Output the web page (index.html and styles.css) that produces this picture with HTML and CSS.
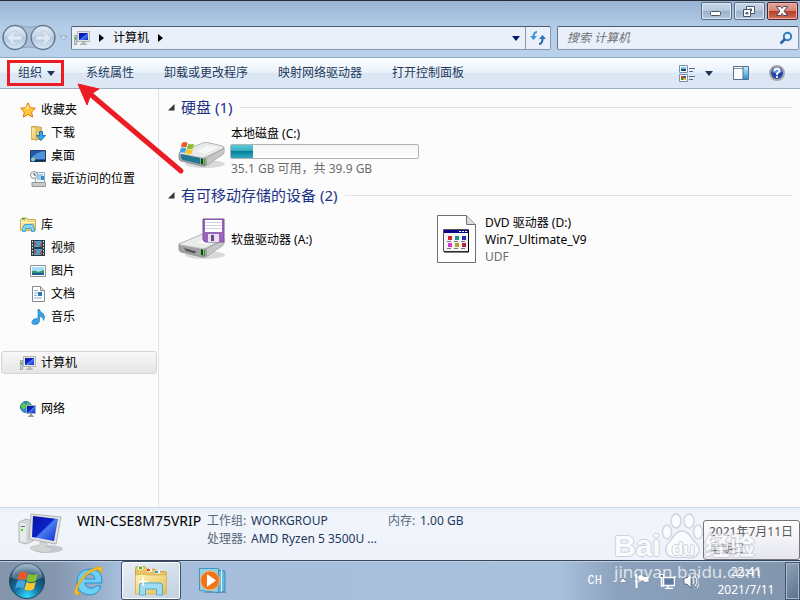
FILE: index.html
```html
<!DOCTYPE html>
<html lang="zh-CN">
<head>
<meta charset="utf-8">
<title>计算机</title>
<link rel="stylesheet" href="styles.css">
</head>
<body>
<svg class="defs" aria-hidden="true">
  <defs>
    <linearGradient id="screen" x1="0" y1="0" x2="1" y2="1"><stop offset="0" stop-color="#0713a0"/><stop offset=".48" stop-color="#0a23c8"/><stop offset=".52" stop-color="#4a7df0"/><stop offset="1" stop-color="#0d2bd2"/></linearGradient>
    <linearGradient id="folder" x1="0" y1="0" x2="1" y2="1"><stop offset="0" stop-color="#fff3b4"/><stop offset="1" stop-color="#e2bd58"/></linearGradient>
    <linearGradient id="blue" x1="0" y1="0" x2="0" y2="1"><stop offset="0" stop-color="#b9ecfb"/><stop offset="1" stop-color="#2f96d2"/></linearGradient>
    <linearGradient id="nav" x1="0" y1="0" x2="0" y2="1"><stop offset="0" stop-color="#e2edf7"/><stop offset=".48" stop-color="#c2d3e5"/><stop offset=".5" stop-color="#afc5da"/><stop offset="1" stop-color="#d8eaf8"/></linearGradient>
    <radialGradient id="orb" cx=".5" cy=".95" r=".9"><stop offset="0" stop-color="#35dcff"/><stop offset=".4" stop-color="#1474a5"/><stop offset=".75" stop-color="#174666"/><stop offset="1" stop-color="#7d9db2"/></radialGradient>
    <symbol id="pc" viewBox="0 0 16 16">
      <rect x=".5" y="5.5" width="2" height="9" fill="#d9dcdd" stroke="#a5a9ac"/><rect x="1" y="7" width="1" height="3" fill="#42cc32"/>
      <rect x="3.5" y="1.5" width="12" height="10" fill="#e5e5e2" stroke="#b6b6b3"/><rect x="5" y="3" width="9" height="7" fill="url(#screen)"/>
      <path d="M8 12h3v1l2 1v1H6v-1l2-1z" fill="#b3b5b6"/>
    </symbol>
    <symbol id="flag" viewBox="0 0 24 22">
      <path d="M4 3q4-3 8 0L10 10q-4-3-8 0z" fill="#e9572b"/><path d="M13 3.500q4 2.500 9 0L20 10.500q-5 2.500-9 0z" fill="#86bf2e"/>
      <path d="M2 11q4-3 8 0L8 18q-4-3-8 0z" fill="#40a5df"/><path d="M11 11.500q4 2.500 9 0L18 18.500q-5 2.500-9 0z" fill="#fcc72d"/>
    </symbol>
    <symbol id="drive" viewBox="0 0 48 28">
      <ellipse cx="27" cy="23" rx="20" ry="4" fill="#999" opacity=".35"/>
      <path d="M1 12L25 2q3-1 6 0l13 3q2 .5 2 2v4q0 2-2 3L29 24q-2 1.500-5 1L3 20q-2-.5-2-3z" fill="#a0a3a5" stroke="#86898b" stroke-width=".8"/>
      <path d="M1 12L25 2q3-1 6 0l13 3q3 1 0 3L28 16q-2 1-5 .5L3 13z" fill="#e9eaea" stroke="#b7b9bb" stroke-width=".6"/>
      <path d="M29 17L46 8v3q0 2-2 3L29 24z" fill="#c4c6c8"/>
      <path d="M19 10L29 5q7 0 11 1.500L27 13z" fill="#f8f8f8"/>
      <path d="M23 17.500l4 .5v5.500l-4-.5z" fill="#143d15"/><path d="M25 18h1.500v5H25z" fill="#58f333"/>
    </symbol>
  </defs>
</svg>
<div class="window">
  <header class="frame">
    <div class="caption">
      <button class="cap" aria-label="最小化"><svg width="30" height="16"><rect x="9.500" y="8.500" width="10" height="4" rx="1" fill="#fff" stroke="#4d5666"/></svg></button>
      <button class="cap" aria-label="还原"><svg width="30" height="16" fill="#fff" stroke="#4d5666"><path d="M12.500 3.500h8v7h-8zM15.500 6h2v2h-2z"/><path d="M9.500 6.500h7v7h-7z"/><path d="M12 9.500h2v1.500h-2z"/></svg></button>
      <button class="cap close" aria-label="关闭"><svg width="30" height="16"><path d="M9.500 3.500h4l1.500 2 1.500-2h4l-3.500 4.500 3.500 4.500h-4L15 10.500l-1.500 2h-4L13 8z" fill="#fff" stroke="#54495a"/></svg></button>
    </div>
    <div class="address-row">
      <div class="nav">
        <svg width="68" height="28" viewBox="0 0 68 28">
          <path d="M15 1q8 2 14 2T43 1a12.500 12.500 0 0 1 0 25q-8-3-14-3t-14 3a12.500 12.500 0 0 1 0-25" fill="#a9bfd8" stroke="#8da5c1"/>
          <g fill="url(#nav)" stroke="#65778d" stroke-width="1.300"><circle cx="15" cy="13.500" r="11.800"/><circle cx="43" cy="13.500" r="11.800"/></g>
          <g fill="#dfeaf4" stroke="#b9cbdc" stroke-width=".8"><path d="M7 14l7-7h3l-4 5h9v4h-9l4 5h-3z"/><path d="M51 14l-7-7h-3l4 5h-9v4h9l-4 5h3z"/></g>
          <path d="M60 12h7l-3.500 4z" fill="#dce9f6" stroke="#8da5c1"/>
        </svg>
      </div>
      <div class="address">
        <svg width="16" height="16"><use href="#pc"/></svg>
        <svg width="5" height="8"><path d="M0 0l5 4-5 4z"/></svg>
        <span>计算机</span>
        <svg width="5" height="8"><path d="M0 0l5 4-5 4z"/></svg>
        <button class="plain drop" aria-label="以前的位置"><svg width="8" height="5"><path d="M0 0h8L4 5z" fill="#051a68"/></svg></button>
        <button class="plain refresh" aria-label="刷新"><svg width="16" height="16"><path d="M7 2Q3.500 2 3.500 7.500" fill="none" stroke="#3f97d6" stroke-width="2"/><path d="M0 6h7l-3.500 4z" fill="#3f97d6"/><path d="M9 14q3.500 0 3.500-5.500" fill="none" stroke="#2362a5" stroke-width="2"/><path d="M9 9h7l-3.500-4z" fill="#2b74b8"/></svg></button>
      </div>
      <label class="search"><input type="text" placeholder="搜索 计算机" aria-label="搜索 计算机"><svg width="14" height="14" fill="none"><circle cx="8.500" cy="5.500" r="3.700" stroke="#2b7fc3" stroke-width="2"/><path d="M6 8l-4.500 4.500" stroke="#2360a0" stroke-width="2.500"/></svg></label>
    </div>
  </header>

  <nav class="toolbar">
    <button class="plain organize">组织<svg width="8" height="5"><path d="M0 0h8L4 5z" fill="#1d3557"/></svg></button>
    <button class="plain">系统属性</button>
    <button class="plain">卸载或更改程序</button>
    <button class="plain">映射网络驱动器</button>
    <button class="plain">打开控制面板</button>
    <div class="tools">
      <button class="plain view" aria-label="更改视图"><svg width="17" height="17"><g fill="#fff" stroke="#7b91a8"><path d="M.5.500h8v7h-8zM.5 9.500h8v7h-8z"/></g><path d="M2 2h5v2H2z" fill="#76c5ee"/><path d="M2 4h5v2H2z" fill="#154f6d"/><path d="M2 11h3v2H2z" fill="#dc3b25"/><path d="M5 11h2v2H5z" fill="#2754d2"/><path d="M2 13h2v2H2z" fill="#1d9b28"/><path d="M4 13h3v2H4z" fill="#e4b323"/><path d="M10 3.500h6M10 6.500h4M10 11.500h6M10 14.500h4" stroke="#536c8e"/></svg><svg width="8" height="5"><path d="M0 0h8L4 5z" fill="#1d3557"/></svg></button>
      <button class="plain" aria-label="预览窗格"><svg width="16" height="14"><path d="M.5.500h15v13H.5z" fill="#fff" stroke="#536f8f"/><path d="M1 2.500h9" stroke="#8397ae" /><path d="M10 1h5v12h-5z" fill="url(#blue)"/><path d="M10 1v12" stroke="#536f8f"/></svg></button>
      <button class="plain" aria-label="帮助"><svg width="16" height="16"><circle cx="8" cy="8" r="7" fill="#2347ae" stroke="#aaa8a5" stroke-width="2"/><path d="M3 7q1-4 5-4t5 4q-5 2-10 0" fill="#6f93e4"/><path d="M5.500 6q0-2.500 2.500-2.500T10.500 6Q10.500 7 8 8.500V10M8 11v2" stroke="#fff" stroke-width="1.800" fill="none"/></svg></button>
    </div>
  </nav>

  <main class="body">
    <aside class="side">
      <ul>
        <li class="root"><svg width="16" height="16"><path d="M8 .8l2.200 4.800 5.200.7-3.800 3.600 1 5.200L8 12.500l-4.700 2.600 1-5.200L.6 6.300l5.200-.7z" fill="#ffc73b" stroke="#df7b13"/><path d="M8 3l1.300 3.500H5z" fill="#ffeba0"/></svg>收藏夹</li>
        <li><svg width="16" height="16"><path d="M1.500 1.500h5l5 1v12h-10z" fill="#e8c76c" stroke="#c7a14b"/><path d="M1.500 1.500l5 2v12l-5-2z" fill="url(#folder)" stroke="#d6b257"/><path d="M9.500 6.500h3v4h3L11 15.500 6.500 10.500h3z" fill="#37a4ea" stroke="#1b74bc"/></svg>下载</li>
        <li><svg width="16" height="16"><path d="M.5 2.500h15v11H.5z" fill="#2456aa" stroke="#234261"/><path d="M1 11Q5 4 15 3v8z" fill="#4f93d8"/><path d="M1 12h14v1.500H1z" fill="#13304e"/><circle cx="3" cy="11.500" r="2" fill="#6cd0ef"/><path d="M3 10h1.500v2H3z" fill="#f2c445"/></svg>桌面</li>
        <li><svg width="16" height="16"><path d="M5.500 1.500h9v10h-9z" fill="#eef5fb" stroke="#9aa8b4"/><path d="M7 4h6M7 6h4M7 8h5" stroke="#5ba6d2"/><path d="M11 5h3v4h-3z" fill="#3791c5"/><path d="M2 11.500h13.500v4H2z" fill="#c8cacb" stroke="#96999b"/><circle cx="4" cy="4" r="3.500" fill="#f3f5f7" stroke="#8c979f"/><path d="M4 2v2h2" stroke="#456" fill="none"/></svg>最近访问的位置</li>
      </ul>
      <ul>
        <li class="root"><svg width="16" height="16"><path d="M.5 2.500L2 1h5l1 1.500h7.500v11H.5z" fill="url(#folder)" stroke="#cfac50"/><path d="M2 2h3" stroke="#23ae34" stroke-width="1.500"/><path d="M.5 5.500h15" stroke="#fff3c4"/><path d="M2.500 14.500v-3l2-4h8l2 4v3h-3v-3h-6v3z" fill="#80d2ef" stroke="#46a7ce"/></svg>库</li>
        <li><svg width="16" height="16"><path d="M1 0h14v16H1z" fill="#303a3f"/><path d="M2.500 1v14M13.500 1v14" stroke="#e5e9e4" stroke-dasharray="1.500 1.500"/><path d="M4 1h8v6H4zM4 9h8v6H4z" fill="#4a9fdb"/><path d="M4 1l3 3-3 2zM12 2L9 6l3 1zM4 9l3 3-3 2zM12 10l-3 4 3 1z" fill="#a9543d"/></svg>视频</li>
        <li><svg width="16" height="16"><path d="M.5 2.500h15v11H.5z" fill="#fff" stroke="#8b9194"/><path d="M2 4h12v8H2z" fill="#a6dff5"/><path d="M2 8q4-1 6 1l6-2v3H2z" fill="#36946d"/><path d="M2 10h12v2H2z" fill="#215f9b"/></svg>图片</li>
        <li><svg width="16" height="16"><path d="M2.500.500h8l4 4v11h-12z" fill="#fff" stroke="#858a90"/><path d="M10.500.500v4h4" fill="#ddd" stroke="#858a90"/><path d="M4 4.500h4M4 7h4M4 9.500h3M4 12h8" stroke="#7dafda"/><path d="M8 6h4v4H8z" fill="#2c7cb9"/></svg>文档</li>
        <li><svg width="16" height="16"><path d="M8 .5h1.500q.5 3 3.500 4 3 3 .5 7 0-4-4-4v4.500q-.5 3.500-4.500 3.500T2 12.500q1-3.500 6-3z" fill="#39a2e4" stroke="#1873b5" stroke-width=".6"/></svg>音乐</li>
      </ul>
      <ul>
        <li class="root selected"><svg width="16" height="16"><use href="#pc"/></svg>计算机</li>
      </ul>
      <ul>
        <li class="root"><svg width="16" height="16"><circle cx="6" cy="6" r="5.500" fill="#2d8ed1" stroke="#2672a1"/><path d="M2 2q4 0 4 3T3 8Q0 6 2 2M7 1q3 1 3 3L7 5z" fill="#5fcc3d"/><path d="M6.500 4.500h9v8h-9z" fill="#ddd" stroke="#acacac"/><path d="M7 5h8v7H7z" fill="url(#screen)"/><path d="M10 13h2v1l2 1v1H8v-1l2-1z" fill="#999"/></svg>网络</li>
      </ul>
    </aside>

    <section class="content">
      <h2><svg width="7" height="7"><path d="M6.500 0v6.500H0z" fill="#333"/></svg>硬盘 (1)</h2>
      <div class="items">
        <div class="item">
          <svg class="icon" width="48" height="48" viewBox="0 0 48 48"><use href="#drive" y="14" width="48" height="28"/><path d="M3 27l19 4v6L5 33q-2-1-2-3z" fill="#237891"/><use href="#flag" x="1" y="14" width="17" height="15"/></svg>
          <div class="text"><span>本地磁盘 (C:)</span><div class="meter"><i></i></div><span class="muted">35.1 GB 可用，共 39.9 GB</span></div>
        </div>
      </div>
      <h2><svg width="7" height="7"><path d="M6.500 0v6.500H0z" fill="#333"/></svg>有可移动存储的设备 (2)</h2>
      <div class="items">
        <div class="item">
          <svg class="icon" width="48" height="48" viewBox="0 0 48 48"><use href="#drive" y="17" width="48" height="28"/><path d="M6 33l12 3.500-1 2L8 36z" fill="#4f5153"/><path d="M25 4h21v23H27l-2-2z" fill="#9a66bb" stroke="#7d4d9c"/><path d="M27 5h17v12H27z" fill="#fff"/><path d="M27 7.500h17M27 10.500h17M27 13.500h17" stroke="#d8d1e0"/><path d="M30 19h11v8H30z" fill="#e4e1e8"/><path d="M33 20h3v6h-3z" fill="#70438a"/></svg>
          <div class="text"><span>软盘驱动器 (A:)</span></div>
        </div>
        <div class="item">
          <svg class="icon" width="43" height="48" viewBox="0 0 43 48"><path d="M.5.500h29l9 9v38H.5z" fill="#fff" stroke="#6d706d"/><path d="M29.500.500v9h9" fill="#ddd" stroke="#6d706d"/><path d="M6.500 14.500h25v22h-25z" fill="#f4f4f4" stroke="#555"/><path d="M31.500 15v22H7" fill="none" stroke="#000"/><path d="M7 15h24v3H7z" fill="#08088f"/><path d="M22 16.500h2m1 0h2m1 0h2" stroke="#fff"/><g stroke-width="4"><path d="M11 23h4" stroke="#cf2432"/><path d="M18 23h4" stroke="#14938f"/><path d="M25 23h4" stroke="#2029bd"/><path d="M11 30h4" stroke="#dc36d4"/><path d="M18 30h4" stroke="#aaa624"/><path d="M25 30h4" stroke="#bd2238"/></g><path d="M10 26.500h4m3 0h4m3 0h4M10 33.500h4m3 0h4m3 0h4" stroke="#777"/></svg>
          <div class="text"><span>DVD 驱动器 (D:)</span><span>Win7_Ultimate_V9</span><span class="muted">UDF</span></div>
        </div>
      </div>
    </section>
  </main>

  <section class="details">
    <svg width="46" height="42" viewBox="0 0 46 42"><ellipse cx="30" cy="37" rx="15" ry="4" fill="#a9adb2" opacity=".6"/><path d="M1 10l7-3 7 2v20l-7 3-7-2z" fill="#d4d7d8" stroke="#b5b8ba"/><path d="M2 11l6 1v18l-6-1z" fill="#e9ebeb"/><path d="M3 14h4v1H3z" fill="#606860"/><circle cx="4" cy="18" r="1.200" fill="#43db26"/><path d="M13 2l30 3-5 27-27-5z" fill="#e3e4e2" stroke="#b1b3b3"/><path d="M15 4l25 3-4 22-22-4z" fill="url(#screen)"/><path d="M22 30l7 1v4q9 1 4 4t-15 0-2-5l6-1z" fill="#d3d5d4" stroke="#b6b8b7" stroke-width=".7"/></svg>
    <strong>WIN-CSE8M75VRIP</strong>
    <dl><dt>工作组:</dt><dd>WORKGROUP</dd><dt>处理器:</dt><dd>AMD Ryzen 5 3500U ...</dd></dl>
    <dl><dt>内存:</dt><dd>1.00 GB</dd></dl>
  </section>

  <footer class="taskbar">
    <button class="plain start" aria-label="开始"><svg width="38" height="38"><circle cx="19" cy="19" r="17.500" fill="url(#orb)" stroke="#1b4663"/><path d="M4 16a15 15 0 0 1 30 0q-15 5-30 0" fill="#fff" opacity=".25"/><use href="#flag" x="7" y="8" width="25" height="23"/></svg></button>
    <button class="plain ie" aria-label="Internet Explorer"><svg width="32" height="32" viewBox="0 0 32 32"><path d="M29 18H12q1 6 7 5 3 0 4-2h5q-3 9-11 9Q4 29 4 17T17 4q13 0 12 14zM12 14h10q-1-5-5-5t-5 5z" fill="#6fd0f6" stroke="#2490cf"/><path d="M8 28q-8 5-6-3T14 7Q27-1 29 3q1 3-2 6 1-5-4-4Q14 7 6 20q-4 9 2 8z" fill="#f8c12c" stroke="#d79b13" stroke-width=".7"/></svg></button>
    <button class="plain active" aria-label="资源管理器"><svg width="34" height="30" viewBox="0 0 34 30"><path d="M1.500 2.500q0-2 2-2h7l2 2 9 1 2 2h7q2 0 2 2v20h-31z" fill="#e9c465" stroke="#c9a14a"/><path d="M4 2h5M13 4h5M21 6h5" stroke="#fff" stroke-width="3"/><path d="M5 2h3" stroke="#23b637" stroke-width="2"/><path d="M13 4h3" stroke="#dd4737" stroke-width="2"/><path d="M21 6h3" stroke="#319bdd" stroke-width="2"/><path d="M1.500 9q6-2 12 0h19v19h-31z" fill="url(#folder)" stroke="#d9b75d"/><path d="M5.500 29v-9q0-3 3-3h17q3 0 3 3v9h-6v-6h-11v6z" fill="#9fdcf4" stroke="#57aacd"/><path d="M9 11v9M4.500 15.500h9" stroke="#fff" stroke-width="1.500"/></svg></button>
    <button class="plain" aria-label="Windows Media Player"><svg width="30" height="26"><path d="M2 25h26l-4-4z" fill="#7891ad"/><path d="M17 2l9 1v20l-9 2z" fill="#69b8dc" stroke="#3a8cb2"/><path d="M22.500 2v22" stroke="#d8f2fb"/><path d="M.5.500h19v24l-19-2z" fill="#94cfe8" stroke="#4696bc"/><circle cx="11" cy="12.500" r="9.500" fill="#ef7319" stroke="#ffb36e"/><path d="M8 6l9 6.500L8 19z" fill="#fff"/></svg></button>
    <div class="tray">
      <span class="lang">CH</span>
      <button class="plain" aria-label="显示隐藏的图标"><svg width="8" height="5"><path d="M0 4.500h8L4 0z" fill="#fff" stroke="#4d617a" stroke-width=".5"/></svg></button>
      <svg width="16" height="16"><path d="M1.500 1v14" stroke="#fff" stroke-width="2"/><path d="M3 2q3-1 5 1 3 1 7 0l-2 3 2 3q-4 1-7-1-2-1-5 0z" fill="#fff" stroke="#405169" stroke-width=".6"/></svg>
      <svg width="16" height="16"><path d="M4.500 4.500h11v8h-11z" fill="#5e7c9e" stroke="#fff" stroke-width="1.500"/><path d="M9 13v2M6 15.500h8M2.500 5v8H5" stroke="#fff" stroke-width="1.500" fill="none"/><path d="M.5 1.500h4v3h-4z" fill="#58718d" stroke="#fff"/></svg>
      <svg width="16" height="16"><path d="M1 5h3l4-4v14l-4-4H1z" fill="#fff" stroke="#405169" stroke-width=".7"/><path d="M10 5q2 3 0 6M12 3q4 5 0 10M14 1q5 7 0 14" stroke="#fff" fill="none"/></svg>
      <time class="clock">22:41<br>2021/7/11</time>
    </div>
    <button class="plain desktop" aria-label="显示桌面"></button>
  </footer>

  <div class="tooltip" role="tooltip">2021年7月11日<br>星期日</div>

  <div class="watermark">
    <div class="brand"><span>Bai</span><span class="paw"><svg width="44" height="50" viewBox="0 0 44 50"><g fill="#fff" stroke="#c5cbd6" stroke-width="1.500"><ellipse cx="6" cy="20" rx="4.500" ry="7"/><ellipse cx="15" cy="9" rx="5" ry="7"/><ellipse cx="28" cy="9" rx="5" ry="7"/><ellipse cx="37" cy="20" rx="4.500" ry="7"/><path d="M21 19q6 0 11 9 9 8 5 14-3 5-15 3-12 2-16-3-4-7 4-14 5-9 11-9z"/></g></svg><b>du</b></span><span>经验</span></div>
    <div class="url">jingyan.baidu.com</div>
  </div>
  <svg class="arrow" width="108" height="96" viewBox="0 0 108 96"><path d="M12 10L104 88" stroke="#ec1c24" stroke-width="5" stroke-linecap="round"/><path d="M1 1l21 5-8 5-4 11z" fill="#ec1c24" stroke="#ec1c24"/></svg>
</div>
</body>
</html>
```
FILE: styles.css
```css
* { box-sizing: border-box; }
body {
  margin: 0;
  font: 12px/16px "Noto Sans", "Noto Sans CJK SC", sans-serif;
  color: #000;
}
button, input { font: inherit; color: inherit; }
svg { display: block; flex: none; }
ul, dl, dd { margin: 0; padding: 0; list-style: none; }
.defs { position: absolute; width: 0; height: 0; }
.plain { border: 0; padding: 0; background: none; }

.window {
  position: relative;
  display: flex;
  flex-direction: column;
  min-height: 100vh;
  overflow: hidden;
}

.frame {
  border-top: 1px solid #2b2f36;
  padding: 1px 1px 5px 0;
  background: linear-gradient(#98b4d3, #b5cee8 50%, #b9d1ea);
}
.caption { display: flex; justify-content: flex-end; gap: 2px; height: 22px; padding-right: 1px; }
.cap {
  width: 31px;
  height: 18px;
  padding: 0;
  border: 1px solid #566b87;
  border-radius: 2px;
  background: linear-gradient(#c8d7e8, #b6c8dd 48%, #9bb1cb 50%, #b2c8e0);
  box-shadow: inset 0 0 0 1px #dbe7f3;
}
.cap svg { margin: -1px 0 0 -1px; }
.close {
  border-color: #53202c;
  background: linear-gradient(#e5a598, #d78475 48%, #b93a25 50%, #d0705a);
  box-shadow: inset 0 0 0 1px #e8b4aa;
}
.address-row { display: flex; align-items: center; }
.nav { width: 71px; }
.address, .search {
  display: flex;
  align-items: center;
  height: 24px;
  border: 1px solid #8598af;
  border-top-color: #4c5a6c;
  border-left-color: #63758b;
  border-radius: 2px;
  background: #e9f0f9;
}
.address { flex: 1; gap: 9px; padding-left: 2px; }
.drop { margin-left: auto; }
.refresh {
  display: grid;
  place-items: center;
  width: 25px;
  height: 22px;
  border-left: 1px solid #8598af;
  margin-left: -4px;
}
.search { flex: 0 1 242px; min-width: 0; margin-left: 6px; padding: 0 5px 0 9px; }
.search input {
  flex: 1;
  min-width: 0;
  border: 0;
  padding: 0;
  outline: 0;
  background: none;
  font-style: italic;
}
.search input::placeholder { color: #6d7177; opacity: 1; }

.toolbar {
  display: flex;
  align-items: center;
  gap: 30px;
  height: 32px;
  padding-right: 15px;
  padding-left: 7px;
  border-top: 1px solid #8fabcb;
  border-bottom: 1px solid #a0b0c9;
  background: linear-gradient(#fcfeff, #e9f2fb 48%, #dce7f5 50%, #dce6f4);
  color: #1e395b;
}
.organize {
  display: flex;
  align-items: center;
  gap: 5px;
  height: 26px;
  margin-right: -8px;
  padding: 0 6px 0 8px;
  border: 3px solid #ec1c24;
}
.tools { display: flex; align-items: center; gap: 20px; margin-left: auto; }
.view { display: flex; align-items: center; gap: 9px; }

.body { flex: 1; display: flex; background: #fcfcfc; }
.side {
  display: flex;
  flex-direction: column;
  gap: 23px;
  width: 159px;
  padding: 9px 1px;
  border-right: 1px solid #d6e5f5;
}
.side li { display: flex; align-items: center; gap: 5px; height: 23px; padding-left: 29px; }
.side .root { padding-left: 19px; }
.side .selected {
  padding-left: 18px;
  border: 1px solid #d4d4d4;
  border-radius: 3px;
  background: linear-gradient(#f8f8f8, #e5e5e5);
}
.content { flex: 1; padding: 7px 7px 0 9px; }
h2 {
  display: flex;
  align-items: center;
  gap: 6px;
  margin: 0;
  font-size: 15px;
  line-height: 22px;
  font-weight: 400;
  color: #1e3287;
}
h2::after { content: ""; flex: 1; height: 1px; margin-left: 2px; background: #e2e2e2; }
.items {
  display: grid;
  grid-template-columns: repeat(auto-fill, 259px);
  height: 66px;
  padding: 7px 0 0 10px;
}
.item { display: flex; align-items: center; gap: 5px; height: 52px; }
.text { display: flex; flex-direction: column; line-height: 17px; }
.muted { color: #6d6d6d; }
.meter {
  width: 189px;
  height: 15px;
  margin: 2px 0 1px -1px;
  border: 1px solid #b2b2b2;
  border-radius: 2px;
  background: linear-gradient(#f4f4f4, #fff);
}
.meter i {
  display: block;
  width: 12%;
  height: 13px;
  background: linear-gradient(#5bcbdc, #35a9bd 48%, #068398 50%, #2faac0);
}

.details {
  display: flex;
  height: 53px;
  padding: 4px 18px;
  border-top: 1px solid #cbd8e8;
  background: linear-gradient(#e7eef8, #f0f4fb 10%, #f0f3fb);
  color: #1e395b;
}
.details strong { width: 130px; margin-left: 13px; font-size: 14px; line-height: 18px; font-weight: 400; color: #000; white-space: nowrap; }
.details dl { display: grid; grid-template-columns: 44px 1fr; align-content: start; width: 181px; line-height: 18px; white-space: nowrap; }
.details dl + dl { grid-template-columns: 32px 1fr; }
dt { color: #5a6778; }

.taskbar {
  display: flex;
  align-items: center;
  height: 40px;
  padding-left: 8px;
  border-top: 1px solid #354459;
  background: linear-gradient(90deg, #8394ab 0, #8496ae 55px, #a6bedb 120px, #a8c0dc 70%, #8ca2bd 77%, #8194ac);
  box-shadow: inset 0 1px #bed0e5;
  color: #fff;
}
.ie { margin: 0 16px 0 27px; }
.active {
  display: grid;
  place-items: center;
  width: 60px;
  height: 39px;
  margin-right: 18px;
  border: 1px solid #3c5067;
  border-radius: 3px;
  background: linear-gradient(150deg, #e9eff6, #c1d0e1);
  box-shadow: inset 0 0 0 1px #fff;
}
.tray { display: flex; align-items: center; gap: 8px; margin-left: auto; }
.lang { margin-right: 9px; font: 12px/12px "Liberation Mono", monospace; }
.clock { width: 78px; margin-top: 1px; line-height: 18px; text-align: center; }
.desktop {
  width: 15px;
  height: 38px;
  border: 1px solid #42566f;
  background: linear-gradient(135deg, #8fa2b9, #5c718b);
  box-shadow: inset 0 0 0 1px #a8b8cb;
}
.tooltip {
  position: absolute;
  right: 0;
  bottom: 40px;
  width: 97px;
  height: 40px;
  padding: 2px 5px;
  border: 1px solid #767676;
  border-radius: 3px;
  background: linear-gradient(#fff, #e4e5f0);
  line-height: 17px;
  color: #575757;
  white-space: nowrap;
}
.watermark { position: absolute; right: 40px; bottom: 18px; width: 146px; color: #fff; opacity: .72; pointer-events: none; }
.brand { display: flex; align-items: flex-end; font: 700 30px/32px "Liberation Sans", "Noto Sans CJK SC", sans-serif; text-shadow: 1px 0 #bfc5d0, -1px 0 #bfc5d0, 0 1px #bfc5d0, 0 -1px #bfc5d0; }
.brand > span:last-child { font-size: 25px; }
.paw { position: relative; }
.paw b { position: absolute; left: 11px; bottom: 2px; font-size: 19px; line-height: 22px; }
.url { font: 17px/20px "Noto Sans", sans-serif; }
.arrow { position: absolute; left: 77px; top: 83px; pointer-events: none; }
```
